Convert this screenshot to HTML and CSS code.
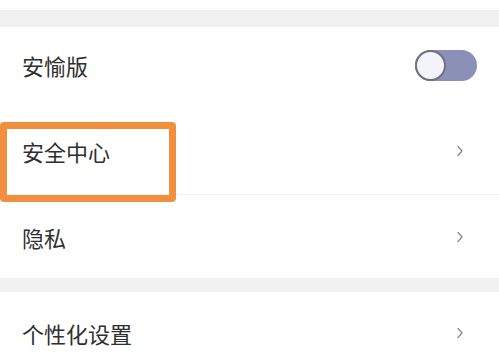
FILE: index.html
```html
<!DOCTYPE html>
<html lang="zh-CN">
<head>
<meta charset="utf-8">
<link rel="stylesheet" href="styles.css">
</head>
<body>
<div class="page">
  <div class="top-space"></div>
  <div class="gap gap-top"></div>
  <div class="group">
    <div class="row row-first">
      <span class="label">安愉版</span>
      <span class="toggle"><span class="knob"></span></span>
    </div>
    <div class="row row-second">
      <span class="label">安全中心</span>
      <svg class="chev" width="10" height="12" viewBox="0 0 10 12"><path d="M5 1.5 L9 6 L5 10.5" fill="none" stroke="#8a8a8a" stroke-width="1.3" stroke-linecap="round" stroke-linejoin="round"/></svg>
    </div>
    <div class="divider"></div>
    <div class="row row-third">
      <span class="label">隐私</span>
      <svg class="chev" width="10" height="12" viewBox="0 0 10 12"><path d="M5 1.5 L9 6 L5 10.5" fill="none" stroke="#8a8a8a" stroke-width="1.3" stroke-linecap="round" stroke-linejoin="round"/></svg>
    </div>
  </div>
  <div class="gap gap-mid"></div>
  <div class="group">
    <div class="row row-fourth">
      <span class="label">个性化设置</span>
      <svg class="chev" width="10" height="12" viewBox="0 0 10 12"><path d="M5 1.5 L9 6 L5 10.5" fill="none" stroke="#8a8a8a" stroke-width="1.3" stroke-linecap="round" stroke-linejoin="round"/></svg>
    </div>
  </div>
  <div class="highlight"></div>
</div>
</body>
</html>
```

FILE: styles.css
```css
html, body {
  margin: 0;
  padding: 0;
  background: #ffffff;
}
.page {
  position: relative;
  width: 499px;
  height: 357px;
  overflow: hidden;
  font-family: "Noto Sans CJK SC", "Noto Sans", sans-serif;
}
.top-space {
  height: 10px;
}
.gap {
  background: #f1f1f1;
}
.gap-top {
  height: 17px;
}
.gap-mid {
  height: 14px;
}
.row {
  display: flex;
  align-items: center;
  justify-content: space-between;
  padding: 0 22px;
  box-sizing: border-box;
}
.row-first {
  height: 78px;
  padding-bottom: 2px;
}
.row-second {
  height: 89px;
  padding-top: 3px;
}
.row-third {
  height: 83px;
}
.row-fourth {
  height: 82px;
}
.divider {
  height: 1px;
  background: #f3f3f3;
}
.label {
  font-size: 22px;
  color: #2f2f2f;
  line-height: 1;
}
.toggle {
  display: flex;
  align-items: center;
  width: 62px;
  height: 31px;
  border-radius: 16px;
  background: #8b91b6;
}
.knob {
  width: 27px;
  height: 27px;
  border-radius: 50%;
  background: #f3f4f9;
  border: 2px solid #6f7080;
}
.chev {
  margin-right: 14px;
}
.highlight {
  position: absolute;
  left: 0;
  top: 122px;
  width: 162px;
  height: 66px;
  border: 7px solid #f0903f;
  border-radius: 4px;
}
```
